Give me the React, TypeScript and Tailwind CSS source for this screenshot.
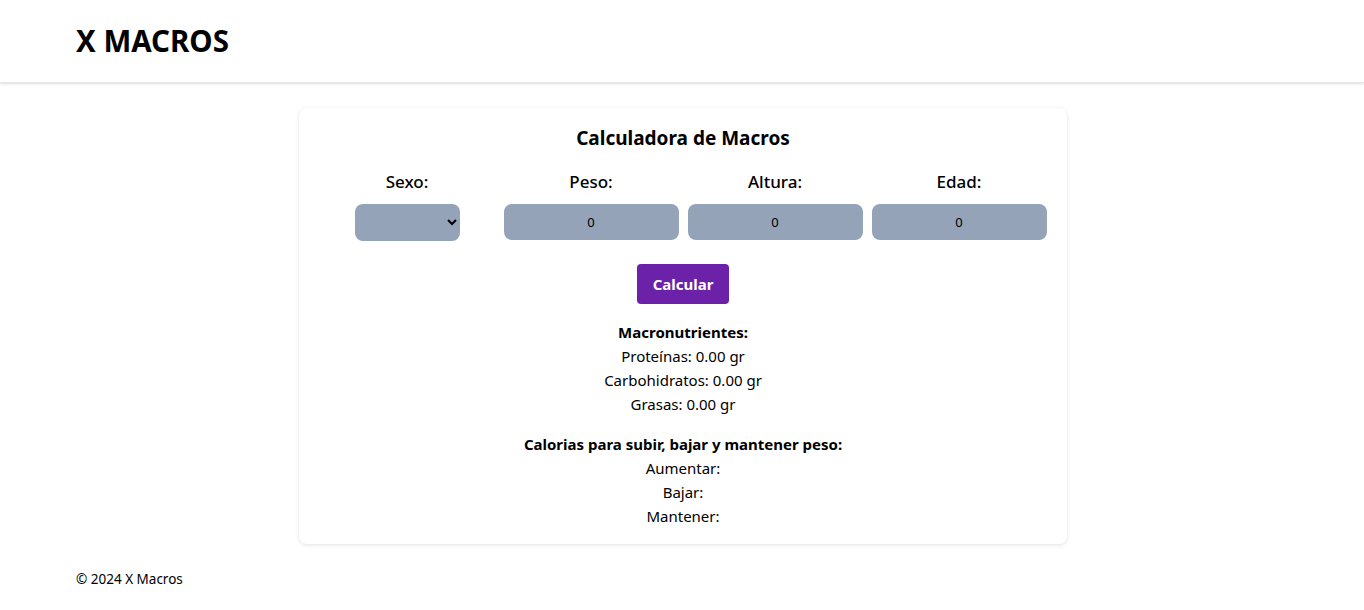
import { useState } from "react";

const font = { fontFamily: '"Noto Sans", "Segoe UI", sans-serif' };

const App = () => {
  const [sexo, setSexo] = useState("");
  const [peso, setPeso] = useState("0");
  const [altura, setAltura] = useState("0");
  const [edad, setEdad] = useState("0");

  return (
    <div className="min-h-screen bg-white text-black font-['Noto_Sans',sans-serif]" style={font}>
      <header className="h-[83px] border-b border-gray-200 shadow-sm flex items-center px-[76px]">
        <h1 className="text-[29.5px] font-bold">X MACROS</h1>
      </header>

      <main className="flex justify-center pt-[25px]">
        <div className="w-[768px] ml-[2px] bg-white rounded-lg shadow-[0_1px_4px_rgba(0,0,0,0.12)] p-4 pb-4 flex flex-col items-center">
          <h2 className="text-[19px] font-bold leading-7">Calculadora de Macros</h2>

          <div className="grid grid-cols-4 w-full mt-[18px]">
            <div className="flex flex-col items-center">
              <label className="text-[17px] font-medium leading-6">Sexo:</label>
              <select
                value={sexo}
                onChange={(e) => setSexo(e.target.value)}
                className="mt-[10px] w-[105px] h-[37px] bg-[#94a3b8] rounded-lg px-2 text-sm"
              >
                <option value=""></option>
                <option value="h">Hombre</option>
                <option value="m">Mujer</option>
              </select>
            </div>
            {[
              ["Peso:", peso, setPeso],
              ["Altura:", altura, setAltura],
              ["Edad:", edad, setEdad],
            ].map(([label, val, set]: any) => (
              <div key={label} className="flex flex-col items-center">
                <label className="text-[17px] font-medium leading-6">{label}</label>
                <input
                  value={val}
                  onChange={(e) => set(e.target.value)}
                  className="mt-[10px] w-[175px] h-[36px] bg-[#94a3b8] rounded-lg text-center text-[13px] outline-none"
                />
              </div>
            ))}
          </div>

          <button className="mt-[23px] w-[92px] h-[40px] bg-[#6b21a8] text-white font-bold rounded text-[15px]">
            Calcular
          </button>

          <div className="mt-4 text-center text-[15px] leading-6">
            <p className="font-bold">Macronutrientes:</p>
            <p>Proteínas: 0.00 gr</p>
            <p>Carbohidratos: 0.00 gr</p>
            <p>Grasas: 0.00 gr</p>
          </div>

          <div className="mt-4 text-center text-[15px] leading-6">
            <p className="font-bold">Calorias para subir, bajar y mantener peso:</p>
            <p>Aumentar: </p>
            <p>Bajar: </p>
            <p>Mantener: </p>
          </div>
        </div>
      </main>

      <footer className="px-[76px] pt-[25px] text-[13.5px]">© 2024 X Macros</footer>
    </div>
  );
};

export default App;
